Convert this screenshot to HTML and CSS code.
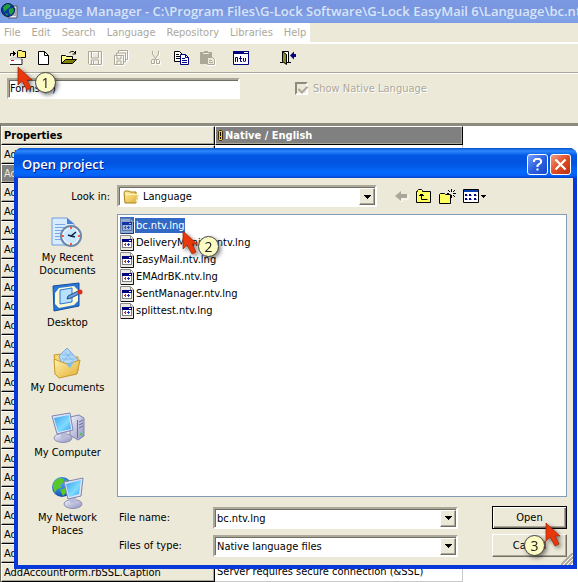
FILE: index.html
```html
<!DOCTYPE html>
<html lang="en">
<head>
<meta charset="utf-8">
<title>Language Manager</title>
<link rel="stylesheet" href="styles.css">
</head>
<body>
<svg class="defs" aria-hidden="true">
  <defs>
    <linearGradient id="screen" x1="0" y1="0" x2="1" y2="1"><stop offset="0" stop-color="#39a0f0"/><stop offset=".6" stop-color="#7fdcff"/><stop offset="1" stop-color="#2f9cf0"/></linearGradient>
    <linearGradient id="metal" x1="0" y1="0" x2="1" y2="1"><stop offset="0" stop-color="#f4f4fc"/><stop offset="1" stop-color="#8c90bc"/></linearGradient>
    <linearGradient id="gold" x1="0" y1="0" x2="1" y2="1"><stop offset="0" stop-color="#fff3a8"/><stop offset="1" stop-color="#e2ac34"/></linearGradient>
    <radialGradient id="earth" cx=".35" cy=".3" r=".8"><stop offset="0" stop-color="#58b4ff"/><stop offset="1" stop-color="#0a3c9c"/></radialGradient>
    <symbol id="pointer" viewBox="0 0 16 26"><path d="M1 1v18l4-4 5 9 4-2-4-8h5z" fill="#e8380c" stroke="#a02400" stroke-width=".7"/></symbol>
    <symbol id="down" viewBox="0 0 7 4"><path d="M0 0h7v1h-1v1h-1v1h-1v1h-1v-1h-1v-1h-1v-1h-1z"/></symbol>
    <symbol id="lng" viewBox="0 0 14 16">
      <path d="M.5.5h10l3 3v12H.5z" fill="#ece9e0" stroke="#8c8c8c"/><path d="M10.500 1v3h3" fill="#fff" stroke="#8c8c8c"/>
      <path d="M13.500 4v11.500H1" fill="none" stroke="#111"/>
      <path d="M2 4h10v9H2z" fill="#808080"/><path d="M2 4h10v3H2z" fill="#000080"/><path d="M3 7h8v5H3z" fill="#fff"/><path d="M9 5h2v1H9z" fill="#fff"/>
      <path d="M4 9h1V8h1v3H5v-1H4z" fill="#e02020"/><path d="M7 9h1V8h1v1h1v1H9v1H8v-1H7z" fill="#2030c0"/>
    </symbol>
  </defs>
</svg>

<div class="window">
  <header class="titlebar">
    <svg width="18" height="17" viewBox="0 0 18 17"><path d="M9 3h7v12H7z" fill="#e8ecf4" stroke="#556"/><path d="M11 6h4M11 8h4M11 10h4M9 12h6" stroke="#668"/><circle cx="7" cy="7" r="6.500" fill="#0838a0" stroke="#032050"/><path d="M2 4l4-3 4 1-2 3-3 2-2 2zM8 6l4-1 1 3-3 4-2-2zM4 10l3 1-1 2z" fill="#20a038"/></svg>
    <h1>Language Manager - C:\Program Files\G-Lock Software\G-Lock EasyMail 6\Language\bc.ntv.lng</h1>
  </header>
  <nav class="menubar">
    <ul>
      <li><a href="#">File</a></li><li><a href="#">Edit</a></li><li><a href="#">Search</a></li><li><a href="#">Language</a></li><li><a href="#">Repository</a></li><li><a href="#">Libraries</a></li><li><a href="#">Help</a></li>
    </ul>
  </nav>
  <div class="toolbar" role="toolbar">
    <button type="button" aria-label="Open project"><svg width="17" height="16" viewBox="0 0 17 16"><path d="M1.500 6V3.500H5" stroke="#000" fill="none"/><path d="M4 1h1v1h1v1h1v1H6v1H5v1H4z"/><path d="M8.500 1.500l1-1h3l1 1h3v6h-8z" fill="#ffee70" stroke="#000"/><path d="M1 10l2-2h9l1 2z" fill="#f4f4f4" stroke="#bbb"/><path d="M0 10h13v4H0z" fill="#fff"/><path d="M13 9v5.500H1" stroke="#222" fill="none"/><path d="M2 10h3v1H2z" fill="#f00"/></svg></button>
    <button type="button" aria-label="New"><svg width="17" height="16" viewBox="0 0 17 16"><path d="M3.500 1.500h6l4 4v9h-10z" fill="#fff" stroke="#000"/><path d="M9.500 1.500v4h4" fill="none" stroke="#000"/></svg></button>
    <button type="button" aria-label="Open"><svg width="17" height="16" viewBox="0 0 17 16"><path d="M.5 13.500v-8h4l1 1h6v3" fill="#ffff90" stroke="#000"/><path d="M.5 13.500l4-4h11l-4 4z" fill="#808000" stroke="#000"/><path d="M8.500 2.500l2-1h2l2 2M14.500 1v3h-3" fill="none" stroke="#000"/></svg></button>
    <button type="button" disabled aria-label="Save"><svg class="off" width="17" height="16" viewBox="0 0 17 16"><path d="M1.500 1.500h13v13h-12l-1-1zM4.500 2v6h7V2M4.500 14v-4h7v4M6.500 11v3"/></svg></button>
    <button type="button" disabled aria-label="Save all"><svg class="off" width="17" height="16" viewBox="0 0 17 16"><path d="M1.500 5.500h9v9h-9zM3.500 5v-2h9v9h-2M5.500 3V.500h9v9h-2M4 6v3h4V6M4 14v-3h4v3"/></svg></button>
    <button type="button" class="group" disabled aria-label="Cut"><svg class="off" width="17" height="16" viewBox="0 0 17 16"><path d="M5.500 1v3l4 6M11.500 1v3l-4 6M5 9.500h2.500v4H4.500v-3zM9.500 9.500h2l1 1v3h-3z"/></svg></button>
    <button type="button" aria-label="Copy"><svg width="17" height="16" viewBox="0 0 17 16"><path d="M1.500 1.500h5l3 3v7h-8z" fill="#fff" stroke="#000"/><path d="M3 4.500h3M3 6.500h4M3 8.500h4" stroke="#000"/><path d="M7.500 4.500h5l3 3v7h-8z" fill="#fff" stroke="#000080"/><path d="M12.500 4.500v3h3M9 8.500h3M9 10.500h5M9 12.500h5" stroke="#000080" fill="none"/></svg></button>
    <button type="button" disabled aria-label="Paste"><svg width="17" height="16" viewBox="0 0 17 16"><path d="M1 2h4V1h4v1h4v12H1z" fill="#aca899"/><path d="M4 3.500h6" stroke="#ece9d8"/><path d="M8.500 7.500h5l2 2v5h-7z" fill="#ece9d8" stroke="#aca899"/><path d="M10 10.500h3M10 12.500h4" stroke="#aca899" fill="none"/><path d="M16.500 9v6.500H8" stroke="#fff" fill="none"/></svg></button>
    <button type="button" class="group" aria-label="Native view"><svg width="17" height="16" viewBox="0 0 17 16"><path d="M.5 1.500h15v13H.5z" fill="#fff" stroke="#000080"/><path d="M0 1h16v3H0z" fill="#000080"/><path d="M11 2.500h4" stroke="#fff"/><path d="M2.500 12V7.500h2V12M7.500 6v5.500H9M6 8.500h3M10.500 8v3l1 1 1-1V8" stroke="#000080" fill="none"/></svg></button>
    <button type="button" class="group wide" aria-label="Exit"><svg width="17" height="16" viewBox="0 0 17 16"><path d="M1 12.500h3M9 12.500h3" stroke="#000"/><path d="M3.500 1.500h6v11h-3" fill="#fff" stroke="#000"/><path d="M3.500 1.500l4 3v10l-4-3z" fill="#8c8c20" stroke="#000"/><path d="M11 5.500l4-4v2.500h2v3h-2v2.500z" fill="#000080"/></svg></button>
  </div>
  <div class="filter">
    <input type="text" class="sunken" value="Forms (*)" aria-label="Filter">
    <label class="check"><input type="checkbox" checked disabled><span>Show Native Language</span></label>
  </div>
  <table class="grid">
    <colgroup><col class="c1"><col class="c2"></colgroup>
    <thead><tr><th>Properties</th><th class="active"><svg width="5" height="11" viewBox="0 0 5 11"><path d="M.5 1.500l1-1h2l1 1v8l-1 1h-2l-1-1z" fill="#ffc020" stroke="#402800"/><path d="M2 2h1v4H2zM2 7h1v2H2z"/></svg>Native / English</th></tr></thead>
    <tbody>
      <tr><td>AddAccountForm</td><td></td></tr>
      <tr class="picked"><td>AddAccountForm</td><td></td></tr>
      <tr><td>AddAccountForm</td><td></td></tr>
      <tr><td>AddAccountForm</td><td></td></tr>
      <tr><td>AddAccountForm</td><td></td></tr>
      <tr><td>AddAccountForm</td><td></td></tr>
      <tr><td>AddAccountForm</td><td></td></tr>
      <tr><td>AddAccountForm</td><td></td></tr>
      <tr><td>AddAccountForm</td><td></td></tr>
      <tr><td>AddAccountForm</td><td></td></tr>
      <tr><td>AddAccountForm</td><td></td></tr>
      <tr><td>AddAccountForm</td><td></td></tr>
      <tr><td>AddAccountForm</td><td></td></tr>
      <tr><td>AddAccountForm</td><td></td></tr>
      <tr><td>AddAccountForm</td><td></td></tr>
      <tr><td>AddAccountForm</td><td></td></tr>
      <tr><td>AddAccountForm</td><td></td></tr>
      <tr><td>AddAccountForm</td><td></td></tr>
      <tr><td>AddAccountForm</td><td></td></tr>
      <tr><td>AddAccountForm</td><td></td></tr>
      <tr><td>AddAccountForm</td><td></td></tr>
      <tr><td>AddAccountForm</td><td></td></tr>
      <tr><td>AddAccountForm.rbSSL.Caption</td><td>Server requires secure connection (&amp;SSL)</td></tr>
    </tbody>
  </table>
</div>

<section class="dialog" role="dialog" aria-labelledby="dlg-title">
  <header>
    <h2 id="dlg-title">Open project</h2>
    <button type="button" class="help" aria-label="Help"><svg width="19" height="19" viewBox="0 0 19 19"><path d="M6 7V5.500L7.500 4h4L13 5.500v2L9.500 10.500V12M9.500 13.500v2" fill="none" stroke="#fff" stroke-width="2"/></svg></button>
    <button type="button" class="close" aria-label="Close"><svg width="19" height="19" viewBox="0 0 19 19"><path d="M4.500 4.500l10 10M14.500 4.500l-10 10" stroke="#fff" stroke-width="2.200"/></svg></button>
  </header>
  <div class="body">
    <div class="lookrow">
      <label for="lookin">Look in:</label>
      <div class="combo sunken">
        <svg width="16" height="14" viewBox="0 0 16 14"><path d="M1 3l1-2h4l1 1h6v2l2 1-2 8H2z" fill="url(#gold)" stroke="#a88018"/><path d="M3 4.500h12l-2 8" fill="none" stroke="#fff6c0"/></svg>
        <select id="lookin"><option>Language</option></select>
        <span class="arrow"><svg width="7" height="4"><use href="#down"/></svg></span>
      </div>
      <div class="navtools">
        <button type="button" disabled aria-label="Back"><svg width="14" height="12" viewBox="0 0 14 12"><path d="M2 7l5 5v-3h6V5" fill="none" stroke="#fff"/><path d="M0 6l6-5v3h6v4H6v3z" fill="#aca899"/></svg></button>
        <button type="button" aria-label="Up one level"><svg width="16" height="14" viewBox="0 0 16 14"><path d="M.5 13.500v-11h1v-1l1-1h3l1 1v1h8v11z" fill="#ffff60" stroke="#000"/><path d="M5.500 5v5.500h6M3 6.500h5M4 5.500h3" stroke="#000" fill="none"/></svg></button>
        <button type="button" aria-label="New folder"><svg width="17" height="15" viewBox="0 0 17 15"><path d="M.5 14.500v-9l1-1h4l1 1h5v9z" fill="#ffff60" stroke="#000"/><path d="M12.500 0v3M12.500 6v3M8 4.500h2M14 4.500h3M9 1l2 2M16 1l-2 2M14 6l2 2" stroke="#000"/></svg></button>
        <button type="button" aria-label="View menu"><svg width="24" height="14" viewBox="0 0 24 14"><path d="M.5.500h15v13H.5z" fill="#fff" stroke="#000"/><path d="M1 1h14v2H1z" fill="#0840b0"/><path d="M2 5h2v2H2zM6 5h2v2H6zM11 5h2v2h-2zM2 9h2v2H2zM6 9h2v2H6zM11 9h2v2h-2z" fill="#000080"/><path d="M4 6.500h1M8 6.500h1M13 6.500h1M4 10.500h1M8 10.500h1M13 10.500h1" stroke="#888"/><path d="M18 6h5v1h-1v1h-1v1h-1V8h-1V7h-1z"/></svg></button>
      </div>
    </div>
    <div class="main">
      <nav class="places">
        <a href="#"><svg width="34" height="32" viewBox="0 0 34 32"><path d="M1 1h15l7 6v21H1z" fill="#d8ecff" stroke="#6c9ce0"/><path d="M16 1v6h7z" fill="#4a80d8"/><path d="M4 7.500h10M4 10.500h12M4 13.500h8M4 16.500h6M4 19.500h6M4 22.500h6" stroke="#78a8e8"/><circle cx="20" cy="19" r="10" fill="#edf6ff" stroke="#7088a8" stroke-width="2"/><circle cx="20" cy="19" r="7.500" fill="#c8e8ff"/><path d="M20 10v2M20 26v2M11 19h2M27 19h2" stroke="#f06030" stroke-width="2"/><path d="M25 15l-5 4-3-1M20 19l4 1" stroke="#102848" stroke-width="1.600" fill="none"/></svg>My Recent<br>Documents</a>
        <a href="#"><svg width="34" height="32" viewBox="0 0 34 32"><path d="M2 4l26-3v23L3 29z" fill="#2878d8" stroke="#184c98"/><path d="M8 6l15-2 4 4v11l-4 4-15 3-4-4V11z" fill="#fff8d0"/><path d="M9 8l12-2v14l-12 2z" fill="#b8e0ff" stroke="#2878d8"/><path d="M17 14l-1 3 4-1 8-4-1-3z" fill="#68a0e0" stroke="#205088"/><circle cx="29" cy="10" r="2.500" fill="#d83020"/></svg>Desktop</a>
        <a href="#"><svg width="34" height="32" viewBox="0 0 34 32"><path d="M3 8l7-1 2 3h15v14L6 28z" fill="#f8d870" stroke="#c89830"/><path d="M8 9l8-8 11 12-6 8-10-3z" fill="#b0d8f8" stroke="#80a8d8"/><path d="M11 8h11M11 12h13M14 5l10 11M20 5l-8 10" stroke="#78b0e8" stroke-width=".7"/><path d="M3 12l10 4 4 1 12-4-3 14-18 4-4-4z" fill="url(#gold)" stroke="#c89830"/><path d="M15 17l8-2-4 6z" fill="#78c0f0"/></svg>My Documents</a>
        <a href="#"><svg width="34" height="32" viewBox="0 0 34 32"><path d="M19 5l9-2 5 3v18l-6 4-8-5z" fill="url(#metal)" stroke="#8084b0"/><path d="M26.500 8v18M28 10l4-2M28 13l4-2M28 16l4-2" stroke="#666c9c"/><path d="M29 21h2v2h-2z" fill="#40d040"/><ellipse cx="12" cy="26" rx="9" ry="4.500" fill="url(#metal)" stroke="#8c90b4"/><path d="M10 20h6v6h-6z" fill="#b8bcd8"/><path d="M1 4l18-3 3 17-16 4z" fill="#dce4f8" stroke="#8084b0"/><path d="M3 6l15-3 2 14-13 3z" fill="url(#screen)"/></svg>My Computer</a>
        <a href="#"><svg width="34" height="32" viewBox="0 0 34 32"><circle cx="11" cy="10" r="10" fill="url(#earth)"/><path d="M3 5l5-4 5 1-1 4-3 2 1 3-4 1-2 4-2-6zM14 2l4 3-2 4zM9 13l5-2 2 4-4 4z" fill="#58c828"/><ellipse cx="22" cy="27" rx="9" ry="4.500" fill="url(#metal)" stroke="#8c90b4"/><path d="M19 20h6v6h-6z" fill="#b8bcd8"/><path d="M13 5l19-4-2 18-13 3z" fill="#dce4f8" stroke="#8084b0"/><path d="M15 7l15-4-2 14-10 3z" fill="url(#screen)"/></svg>My Network<br>Places</a>
      </nav>
      <div class="content">
        <ul class="files">
          <li class="selected"><svg width="14" height="16"><use href="#lng"/></svg><span>bc.ntv.lng</span></li>
          <li><svg width="14" height="16"><use href="#lng"/></svg><span>DeliveryMonitor.ntv.lng</span></li>
          <li><svg width="14" height="16"><use href="#lng"/></svg><span>EasyMail.ntv.lng</span></li>
          <li><svg width="14" height="16"><use href="#lng"/></svg><span>EMAdrBK.ntv.lng</span></li>
          <li><svg width="14" height="16"><use href="#lng"/></svg><span>SentManager.ntv.lng</span></li>
          <li><svg width="14" height="16"><use href="#lng"/></svg><span>splittest.ntv.lng</span></li>
        </ul>
        <form class="fields">
          <label for="fname">File name:</label>
          <div class="combo sunken"><input id="fname" type="text" value="bc.ntv.lng"><span class="arrow"><svg width="7" height="4"><use href="#down"/></svg></span></div>
          <button type="button" class="push default">Open</button>
          <label for="ftype">Files of type:</label>
          <div class="combo sunken"><select id="ftype"><option>Native language files</option></select><span class="arrow"><svg width="7" height="4"><use href="#down"/></svg></span></div>
          <button type="button" class="push">Cancel</button>
        </form>
      </div>
    </div>
    <svg class="grip" width="12" height="12" viewBox="0 0 12 12"><path d="M0 12L12 0M4 12l8-8M8 12l4-4" stroke="#aca899" stroke-width="2"/><path d="M2 12L12 2M6 12l6-6M10 12l2-2" stroke="#fff"/></svg>
  </div>
</section>

<div class="step one"><svg width="16" height="26"><use href="#pointer"/></svg><b>1</b></div>
<div class="step two"><svg width="16" height="26"><use href="#pointer"/></svg><b>2</b></div>
<div class="step three"><b>3</b><svg width="16" height="26"><use href="#pointer"/></svg></div>
</body>
</html>
```
FILE: styles.css
```css
* { box-sizing: border-box; }

body {
  margin: 0;
  position: relative;
  min-height: 100vh;
  overflow: hidden;
  background: #fff;
  color: #000;
  font: 11px/13px "DejaVu Sans Condensed", "DejaVu Sans", sans-serif;
}

.defs { position: absolute; width: 0; height: 0; }

button, input, select { font: inherit; color: inherit; }
svg { display: block; flex: none; }
a { color: inherit; text-decoration: none; }
ul { list-style: none; margin: 0; padding: 0; }

.sunken {
  border: 2px solid;
  border-color: #aca899 #fff #fff #aca899;
  box-shadow: inset 1px 1px #716f64;
  background: #fff;
}

/* Main window */
.window { overflow: hidden; }

.titlebar {
  display: flex;
  align-items: center;
  gap: 3px;
  height: 23px;
  padding: 0 1px;
  background: linear-gradient(#7b98e4, #7a96df 40%, #82a4e8 80%, #7c9be4);
  color: #d8e4f8;
}

.titlebar h1 {
  margin: 0;
  font: 600 13px/17px "Open Sans", sans-serif;
  white-space: nowrap;
}

.menubar { height: 21px; border-bottom: 2px solid #fff; background: #ece9d8; }

.menubar ul {
  display: flex;
  gap: 11px;
  width: 310px;
  height: 19px;
  padding: 3px 4px;
  background: #fff;
  color: #aca899;
}

.toolbar {
  display: flex;
  align-items: center;
  gap: 2px;
  height: 29px;
  padding: 0 5px;
  border-bottom: 1px solid #aca899;
  background: #ece9d8;
}

.toolbar button, .navtools button {
  display: flex;
  align-items: center;
  justify-content: center;
  padding: 0;
  border: 0;
  background: none;
}

.toolbar button { width: 24px; height: 22px; }
.toolbar .group { margin-left: 8px; }
.toolbar .wide { margin-left: 20px; }
.off { fill: none; stroke: #aca899; filter: drop-shadow(1px 1px #fff); }

.filter {
  display: flex;
  align-items: flex-start;
  gap: 55px;
  height: 50px;
  padding: 4px 7px;
  border-top: 1px solid #fff;
  background: #ece9d8;
}

.filter > input { width: 233px; height: 21px; padding: 0 1px; }

.check {
  display: flex;
  align-items: center;
  gap: 5px;
  height: 21px;
  color: #aca899;
  text-shadow: 1px 1px #fff;
}

.check input {
  appearance: none;
  width: 13px;
  height: 13px;
  margin: 0;
  border: 2px solid;
  border-color: #8d8b80 #fff #fff #8d8b80;
}

.check input::after {
  content: "";
  display: block;
  width: 4px;
  height: 7px;
  margin-left: 3px;
  border: solid #aca899;
  border-width: 0 2px 2px 0;
  transform: rotate(45deg);
}

.grid {
  display: block;
  width: 100%;
  border-spacing: 0;
  border-top: 3px solid #8d8b80;
  border-left: 1px solid #716f64;
}

.c1 { width: 214px; }
.c2 { width: 248px; }

.grid tr { height: 19px; }

.grid th, .grid td {
  height: 19px;
  padding: 0 2px;
  text-align: left;
  line-height: 16px;
  white-space: nowrap;
}

.grid th, .grid td:first-child {
  background: #ece9d8;
  border: 1px solid;
  border-color: #fff #000 #000 #fff;
  box-shadow: inset -1px -1px #aca899;
}

.grid td:last-child { border-right: 1px solid #c8c8c8; border-bottom: 1px solid #c8c8c8; }
.grid .active { background: #808080; color: #fff; }
.grid .picked td:first-child { background: #808080; color: #ece9d8; }
.grid th svg { display: inline-block; margin-right: 2px; vertical-align: middle; }

/* Open dialog */
.dialog {
  position: absolute;
  top: 148px;
  left: 14px;
  right: 1px;
  border: solid #0838d8;
  border-width: 0 4px 4px;
  border-radius: 8px 8px 0 0;
  background: #0838d8;
}

.dialog header {
  display: flex;
  align-items: center;
  gap: 2px;
  height: 30px;
  margin: 0 -4px;
  padding: 3px 6px 0 8px;
  border-radius: 8px 8px 0 0;
  background: linear-gradient(#0850c8, #2c88ff 10%, #0458e4 25%, #0254e0 50%, #0468fc 80%, #0460f4 92%, #0040c8);
}

.dialog h2 {
  flex: 1;
  margin: 0;
  color: #fff;
  font: 600 13px/17px "Open Sans", sans-serif;
  text-shadow: 1px 1px #0a1883;
}

.help, .close {
  width: 21px;
  height: 21px;
  padding: 0;
  border: 1px solid #fff;
  border-radius: 3px;
}

.help { background: linear-gradient(135deg, #7aa0fc, #2c60e0 50%, #1848c8); }
.close { background: linear-gradient(135deg, #f0a088, #e04c24 50%, #b83010); }

.body { position: relative; padding: 7px 6px 8px 0; background: #ece9d8; }

.lookrow { display: flex; align-items: center; height: 22px; margin-bottom: 7px; }
.lookrow > label { width: 99px; padding-right: 7px; text-align: right; }
.lookrow .combo { width: 260px; padding-left: 4px; }

.combo { display: flex; align-items: center; min-width: 0; height: 22px; padding: 1px 0 0 1px; }

.combo select, .combo input {
  appearance: none;
  flex: 1;
  min-width: 0;
  height: 16px;
  padding: 0 1px;
  border: 0;
  outline: 0;
  background: none;
}

.combo #lookin { padding-left: 4px; }

.arrow {
  display: grid;
  place-items: center;
  width: 16px;
  height: 100%;
  border: 1px solid;
  border-color: #fff #716f64 #716f64 #fff;
  box-shadow: inset -1px -1px #aca899;
  background: #ece9d8;
  pointer-events: none;
}

.navtools { display: flex; align-items: center; gap: 7px; margin-left: 18px; }

.main { display: flex; }

.places {
  display: flex;
  flex-direction: column;
  width: 99px;
  padding-top: 3px;
  text-align: center;
}

.places a { height: 65px; }
.places svg { margin: 0 auto 2px; }

.content { flex: 1; min-width: 0; }

.files { height: 283px; padding: 2px; border: 1px solid #7f9db9; background: #fff; }
.files li { display: flex; align-items: center; gap: 1px; height: 17px; }
.files span { padding: 1px; }
.files .selected { background: linear-gradient(#316ac5, #316ac5) 0 0 / 14px 100% no-repeat; }
.files .selected span { background: #316ac5; color: #fff; }
.files .selected svg { opacity: .5; }

.fields {
  display: grid;
  grid-template-columns: 94px minmax(0, 245px) minmax(75px, 1fr);
  align-items: center;
  gap: 5px 2px;
  padding-top: 9px;
}

.fields label { padding-left: 2px; }

.push {
  justify-self: end;
  width: 75px;
  height: 23px;
  padding: 0;
  border: 1px solid;
  border-color: #fff #716f64 #716f64 #fff;
  box-shadow: inset -1px -1px #aca899;
  background: #ece9d8;
}

.push.default { border-color: #000; box-shadow: inset 1px 1px #fff, inset -1px -1px #716f64, inset -2px -2px #aca899; }

.grip { position: absolute; right: 0; bottom: 0; }

/* Numbered pointers */
.step { position: absolute; display: flex; filter: drop-shadow(2px 2px 2px rgba(0, 0, 0, .5)); }

.step b {
  width: 21px;
  height: 21px;
  border: 1px solid #444;
  border-radius: 50%;
  background: #fdfbc4;
  color: #222;
  font: 14px/19px "Open Sans", sans-serif;
  text-align: center;
}

.one { left: 17px; top: 66px; gap: 2px; }
.two { left: 182px; top: 230px; }
.one b, .two b { margin-top: 6px; }
.three { left: 524px; top: 522px; }
.three b { margin-top: 13px; }
```
